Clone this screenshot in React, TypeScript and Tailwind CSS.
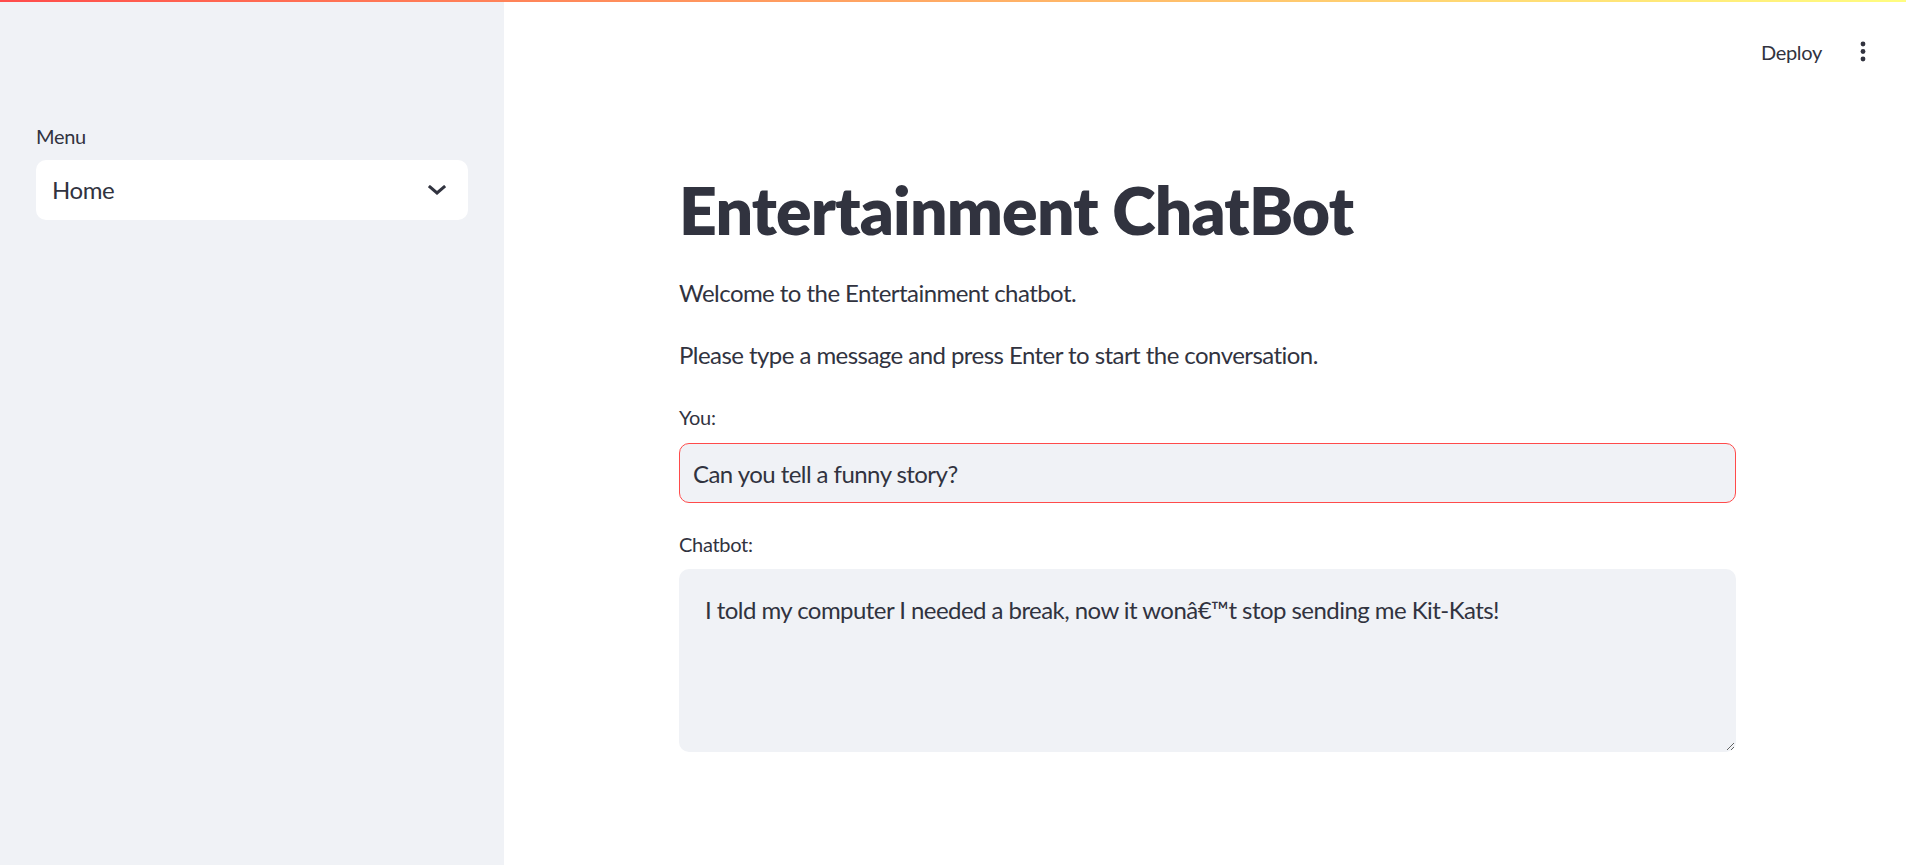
const font = 'font-["Lato","Liberation_Sans",sans-serif]';

function ChevronDown() {
  return (
    <svg width="18" height="10" viewBox="0 0 18 10" fill="none" className="text-[#31333f]">
      <path d="M2 2l7 6 7-6" stroke="currentColor" strokeWidth="3" strokeLinecap="square" />
    </svg>
  );
}

function Kebab() {
  return (
    <svg width="6" height="22" viewBox="0 0 6 22" className="text-[#31333f]">
      <circle cx="3" cy="3" r="2.4" fill="currentColor" />
      <circle cx="3" cy="10.5" r="2.4" fill="currentColor" />
      <circle cx="3" cy="18" r="2.4" fill="currentColor" />
    </svg>
  );
}

function Sidebar() {
  return (
    <aside className="w-[504px] shrink-0 bg-[#f0f2f6] px-[36px] pt-[124px]">
      <div className="mb-[12px] text-[20px] leading-[24px] tracking-[-0.3px]">Menu</div>
      <div className="flex h-[60px] items-center justify-between rounded-[10px] bg-white pl-[16px] pr-[22px]">
        <span className="text-[24px] tracking-[-0.4px]">Home</span>
        <ChevronDown />
      </div>
    </aside>
  );
}

export default function App() {
  return (
    <div className={`relative flex h-[865px] w-full overflow-hidden bg-white text-[#31333f] ${font}`}>
      {/* top decoration line */}
      <div className="absolute left-0 right-0 top-0 z-10 h-[2px] bg-gradient-to-r from-[#ff4b4b] to-[#fffd80]" />

      <Sidebar />

      <main className="flex min-w-0 flex-1 flex-col">
        <header className="flex h-[104px] items-center justify-end gap-[38px] pr-[40px]">
          <span className="text-[20px] tracking-[-0.3px]">Deploy</span>
          <Kebab />
        </header>

        <div className="flex flex-col pl-[175px] pr-[170px]">
          <h1 className="mt-[66px] text-[66px] font-extrabold leading-[1.2] tracking-[-0.8px]">Entertainment ChatBot</h1>
          <p className="mt-[26px] text-[24px] leading-[36px] tracking-[-0.55px]">Welcome to the Entertainment chatbot.</p>
          <p className="mt-[26px] text-[24px] leading-[36px] tracking-[-0.55px]">
            Please type a message and press Enter to start the conversation.
          </p>

          <label className="mt-[30px] text-[20px] leading-[28px] tracking-[-0.3px]">You:</label>
          <input
            readOnly
            value="Can you tell a funny story?"
            className="mt-[12px] h-[60px] w-full rounded-[10px] border border-[#ff4b4b] bg-[#f0f2f6] px-[13px] text-[24px] tracking-[-0.55px] text-[#31333f] outline-none"
          />

          <label className="mt-[27px] text-[20px] leading-[28px] tracking-[-0.3px]">Chatbot:</label>
          <textarea
            readOnly
            value={'I told my computer I needed a break, now it won\u00e2\u20ac\u2122t stop sending me Kit-Kats!'}
            className="mt-[11px] h-[183px] w-full resize-y rounded-[10px] border border-transparent bg-[#f0f2f6] px-[25px] pt-[22px] text-[24px] leading-[36px] tracking-[-0.55px] text-[#31333f] outline-none"
          />
        </div>
      </main>
    </div>
  );
}
